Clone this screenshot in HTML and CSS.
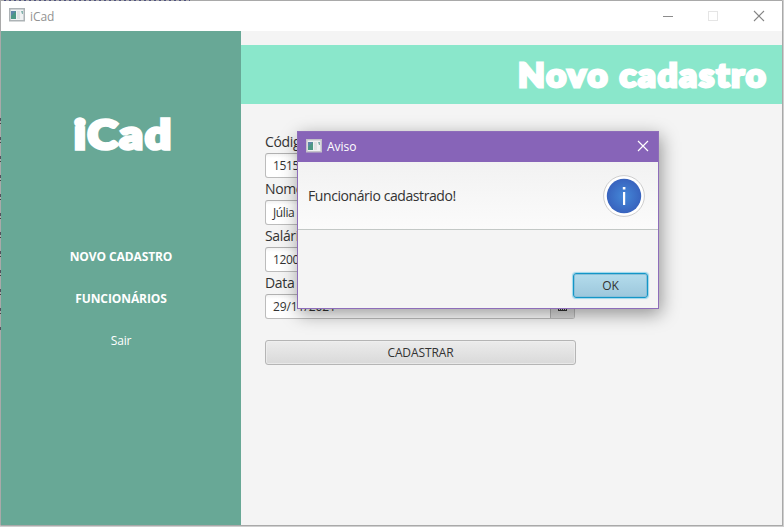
FILE: index.html
```html
<!DOCTYPE html>
<html lang="pt-BR">
<head>
<meta charset="utf-8">
<title>iCad</title>
<link rel="stylesheet" href="styles.css">
</head>
<body>
<div class="window">
  <header class="titlebar">
    <svg class="app-icon" width="16" height="14" viewBox="0 0 16 14"><rect x=".75" y=".75" width="14.5" height="12" fill="#f0f2f3" stroke="#adb3b6" stroke-width="1.5"/><path d="M2 3h5v8H2z" fill="#4c9885"/><path d="M2 3h5L2 8z" fill="#5d86a9"/><path d="M8 3h3v8H8z" fill="#dfe3e4"/><path d="M12 3h2v3h-1z" fill="#84b3ae"/></svg>
    <span class="title">iCad</span>
    <svg class="controls" width="104" height="12" viewBox="0 0 104 12" fill="none"><path d="M0 6.5h10" stroke="#8c8c8c"/><rect x="45.500" y="1.500" width="9" height="9" stroke="#e5e5e5"/><path d="M91 1l10 10M101 1l-10 10" stroke="#858585" stroke-width="1.1"/></svg>
  </header>
  <div class="body">
    <nav class="sidebar">
      <div class="brand"><span>iCad</span></div>
      <a class="link">NOVO CADASTRO</a>
      <a class="link second">FUNCIONÁRIOS</a>
      <a class="exit">Sair</a>
    </nav>
    <main class="main">
      <h1 class="banner"><span>Novo cadastro</span></h1>
      <form class="form">
        <label>Código</label>
        <div class="field">1515</div>
        <label>Nome</label>
        <div class="field">Júlia</div>
        <label>Salário</label>
        <div class="field">1200</div>
        <label>Data</label>
        <div class="field date"><span>29/11/2021</span><i class="picker"><svg width="9" height="9" viewBox="0 0 9 9"><path d="M0 0h9v9H0z" fill="#333"/><path d="M1 3h7v1H1zM1 5h1v3H1zM3 5h1v3H3zM5 5h1v3H5zM7 5h1v3H7z" fill="#ddd"/></svg></i></div>
        <div class="submit">CADASTRAR</div>
      </form>
    </main>
  </div>
</div>
<section class="dialog">
  <header class="dialog-title">
    <svg class="app-icon" width="16" height="14" viewBox="0 0 16 14"><rect x=".75" y=".75" width="14.500" height="12" fill="#f0f2f3" stroke="#c4c2c9" stroke-width="1.5"/><path d="M2 3h5v8H2z" fill="#4c9885"/><path d="M2 3h5L2 8z" fill="#5d86a9"/><path d="M8 3h3v8H8z" fill="#dfe3e4"/><path d="M12 3h2v3h-1z" fill="#84b3ae"/></svg>
    <span>Aviso</span>
    <svg class="dialog-close" width="12" height="12" viewBox="0 0 12 12"><path d="M1 1l10 10M11 1L1 11" stroke="#fff" stroke-width="1.2"/></svg>
  </header>
  <div class="dialog-head">
    <span class="message">Funcionário cadastrado!</span>
    <svg class="info" width="42" height="42" viewBox="0 0 42 42"><defs><radialGradient id="blue"><stop offset="0" stop-color="#4488d8"/><stop offset="1" stop-color="#3863be"/></radialGradient></defs><circle cx="21" cy="21" r="20.400" fill="#fff" stroke="#cecece"/><circle cx="21" cy="21" r="17.200" fill="url(#blue)"/><path d="M20 17h2.200v13H20zM19.800 12h2.600v2.500h-2.600z" fill="#fff"/></svg>
  </div>
  <footer class="dialog-foot"><span class="ok">OK</span></footer>
</section>
</body>
</html>
```
FILE: styles.css
```css
* { box-sizing: border-box; }
body {
  margin: 0;
  width: 784px;
  height: 527px;
  overflow: hidden;
  background: #cfcfcf;
  font-family: "Open Sans", "Noto Sans", sans-serif;
  font-size: 12px;
  color: #333;
}
.window {
  width: 783px;
  height: 526px;
  border: 1px solid #a9a9a9;
  /* dark marks of the page behind show along the left and top edges */
  border-left-color: transparent;
  border-top-color: transparent;
  background:
    linear-gradient(#f4f4f4, #f4f4f4) padding-box,
    repeating-linear-gradient(90deg, #4d5080 0 2px, #a9a9a9 2px 5px) 4px 0 / 186px 1px no-repeat border-box,
    repeating-linear-gradient(#54505c 0 3px, #a9a9a9 3px 5px, #444 5px 6px, #a9a9a9 6px 19px) 0 118px / 1px 214px no-repeat border-box,
    linear-gradient(#a9a9a9, #a9a9a9) border-box;
}
.titlebar {
  height: 30px;
  display: flex;
  align-items: center;
  padding-left: 8px;
  background: #fff;
}
.app-icon { flex: none; position: relative; top: -1px; }
.title { margin-left: 5px; color: #929292; letter-spacing: -.1px; }
.controls { margin-left: auto; margin-right: 15px; }
.body { display: flex; height: 494px; }
.sidebar {
  width: 240px;
  display: flex;
  flex-direction: column;
  align-items: center;
  background: #68a896;
  color: #fff;
}
.brand {
  height: 60px;
  margin-top: 73px;
  font: 900 40px/60px Lato, sans-serif;
  -webkit-text-stroke: 3.5px #fff;
  letter-spacing: 1.8px;
}
.brand span, .banner span { display: inline-block; }
.brand span { transform: translateX(2px) scaleX(1.14); }
.link {
  margin-top: 84px;
  line-height: 18px;
  font-weight: 700;
  letter-spacing: -.1px;
}
.second { margin-top: 24px; }
.exit { margin-top: 24px; line-height: 18px; letter-spacing: -.2px; }
.main { flex: 1; padding-top: 14px; }
.banner {
  height: 59px;
  margin: 0;
  padding-right: 14px;
  text-align: right;
  background: #8ae7cb;
  color: #fff;
  font: 900 33px/60px Lato, sans-serif;
  -webkit-text-stroke: 3px #fff;
  letter-spacing: 1.8px;
}
.banner span { transform: translateY(-1px) scaleX(1.05); transform-origin: right; }
.form { width: 335px; padding: 27px 0 0 24px; }
.form label {
  display: block;
  height: 22px;
  line-height: 22px;
  font-size: 14px;
  letter-spacing: -.35px;
}
.field {
  height: 25px;
  width: 310px;
  padding-left: 7px;
  border: 1px solid #bcbcbc;
  border-top-color: #b0b0b0;
  border-radius: 3px;
  line-height: 23px;
  background: linear-gradient(#f2f2f2, #fff 4px);
  letter-spacing: -.4px;
}
.date { display: flex; justify-content: space-between; letter-spacing: -.1px; }
.picker {
  display: flex;
  align-items: center;
  justify-content: center;
  width: 24px;
  border-left: 1px solid #b5b5b5;
  background: linear-gradient(#eee, #dadada);
}
.submit {
  width: 311px;
  height: 25px;
  margin-top: 21px;
  border: 1px solid #b5b5b5;
  border-radius: 3px;
  background: linear-gradient(#ececec, #d9d9d9);
  box-shadow: inset 0 0 0 1px #f0f0f0aa;
  text-align: center;
  line-height: 23px;
  letter-spacing: -.1px;
}
.dialog {
  position: absolute;
  left: 297px;
  top: 131px;
  width: 362px;
  height: 178px;
  border: 1px solid #8e6dba;
  background: #f4f4f4;
  box-shadow: 2px 5px 17px rgba(0, 0, 0, .4);
}
.dialog-title {
  height: 30px;
  display: flex;
  align-items: center;
  padding: 0 9px 0 8px;
  background: #8764b8;
  color: #fff;
}
.dialog-title span { margin-left: 5px; position: relative; top: -1px; }
.dialog-close { margin-left: auto; position: relative; top: -1px; }
.dialog-head {
  height: 68px;
  display: flex;
  align-items: center;
  justify-content: space-between;
  padding: 0 13px 0 10px;
  border-bottom: 1px solid #c3c8c6;
  background: linear-gradient(#f2f2f2, #fbfbfb);
}
.message { font-size: 14px; letter-spacing: -.42px; }
.dialog-foot { display: flex; justify-content: flex-end; padding: 43px 10px 0 0; }
.ok {
  width: 75px;
  height: 25px;
  border: 1px solid #1396c7;
  border-radius: 3px;
  background: linear-gradient(#b4dcec, #9cc7dc);
  box-shadow: 0 0 1px 1px #9bd6eb, inset 0 0 0 1px #89bfd8;
  text-align: center;
  line-height: 23px;
}
```
